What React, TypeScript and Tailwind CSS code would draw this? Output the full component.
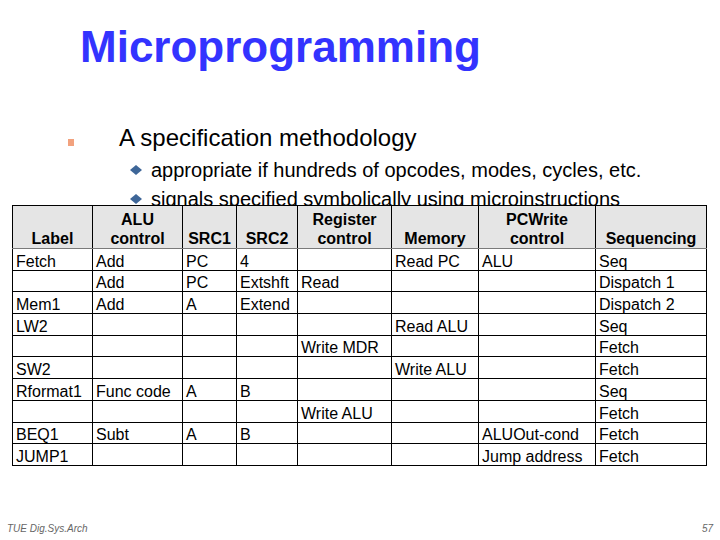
import React from 'react';

const cols = [80, 90, 54, 61, 94, 87, 117, 111];

const head: [string, string][] = [
  ['', 'Label'],
  ['ALU', 'control'],
  ['', 'SRC1'],
  ['', 'SRC2'],
  ['Register', 'control'],
  ['', 'Memory'],
  ['PCWrite', 'control'],
  ['', 'Sequencing'],
];

const rows: string[][] = [
  ['Fetch', 'Add', 'PC', '4', '', 'Read PC', 'ALU', 'Seq'],
  ['', 'Add', 'PC', 'Extshft', 'Read', '', '', 'Dispatch 1'],
  ['Mem1', 'Add', 'A', 'Extend', '', '', '', 'Dispatch 2'],
  ['LW2', '', '', '', '', 'Read ALU', '', 'Seq'],
  ['', '', '', '', 'Write MDR', '', '', 'Fetch'],
  ['SW2', '', '', '', '', 'Write ALU', '', 'Fetch'],
  ['Rformat1', 'Func code', 'A', 'B', '', '', '', 'Seq'],
  ['', '', '', '', 'Write ALU', '', '', 'Fetch'],
  ['BEQ1', 'Subt', 'A', 'B', '', '', 'ALUOut-cond', 'Fetch'],
  ['JUMP1', '', '', '', '', '', 'Jump address', 'Fetch'],
];

function Diamond() {
  return (
    <svg width="12" height="10" viewBox="0 0 12 10" className="shrink-0">
      <polygon points="6,0 12,5 6,10 0,5" fill="#3e6698" />
    </svg>
  );
}

export default function App() {
  return (
    <div className="w-[720px] h-[540px] bg-white flex flex-col overflow-hidden font-['Liberation_Sans',Arial,sans-serif] text-black">
      {/* title */}
      <div className="pl-[80px] pt-[25px]">
        <h1 className="text-[44px] leading-none font-bold text-[#3333ff] whitespace-nowrap">
          Microprogramming
        </h1>
      </div>

      {/* bullets */}
      <div className="mt-[57.4px] flex items-start">
        <span className="ml-[68px] mt-[13px] w-[6px] h-[7px] bg-[#f2a27e] shrink-0" />
        <span className="ml-[45px] text-[24px] leading-none whitespace-nowrap">A specification methodology</span>
      </div>
      <ul className="mt-[5.5px] pl-[130px] text-[20px] leading-[29px]">
        <li className="flex items-center gap-[9px] whitespace-nowrap">
          <Diamond />
          appropriate if hundreds of opcodes, modes, cycles, etc.
        </li>
        <li className="flex items-center gap-[9px] whitespace-nowrap">
          <Diamond />
          signals specified symbolically using microinstructions
        </li>
      </ul>

      {/* table over the last bullet */}
      <div className="relative z-10 mt-[-8.9px] pl-[12px]">
        <table className="table-fixed border-collapse bg-white text-[16px]">
          <colgroup>
            {cols.map((w, i) => (
              <col key={i} style={{ width: w }} />
            ))}
          </colgroup>
          <thead>
            <tr className="h-[43px] bg-[#e5e5e5]">
              {head.map(([a, b], i) => (
                <th
                  key={i}
                  className="border border-black border-b-[#7a7a7a] align-bottom text-center font-bold leading-[19px] px-0 pb-[0.5px]"
                >
                  {a && <div>{a}</div>}
                  <div>{b}</div>
                </th>
              ))}
            </tr>
          </thead>
          <tbody>
            {rows.map((r, ri) => (
              <tr key={ri} className="h-[21.7px]">
                {r.map((c, ci) => (
                  <td key={ci} className="border border-black align-bottom leading-4 pl-[3px] pr-0 py-0 whitespace-nowrap">
                    {c}
                  </td>
                ))}
              </tr>
            ))}
          </tbody>
        </table>
      </div>

      {/* footer */}
      <div className="mt-auto pb-[6.5px] px-[7px] flex justify-between text-[10px] leading-none italic text-[#666]">
        <span>TUE Dig.Sys.Arch</span>
        <span>57</span>
      </div>
    </div>
  );
}
